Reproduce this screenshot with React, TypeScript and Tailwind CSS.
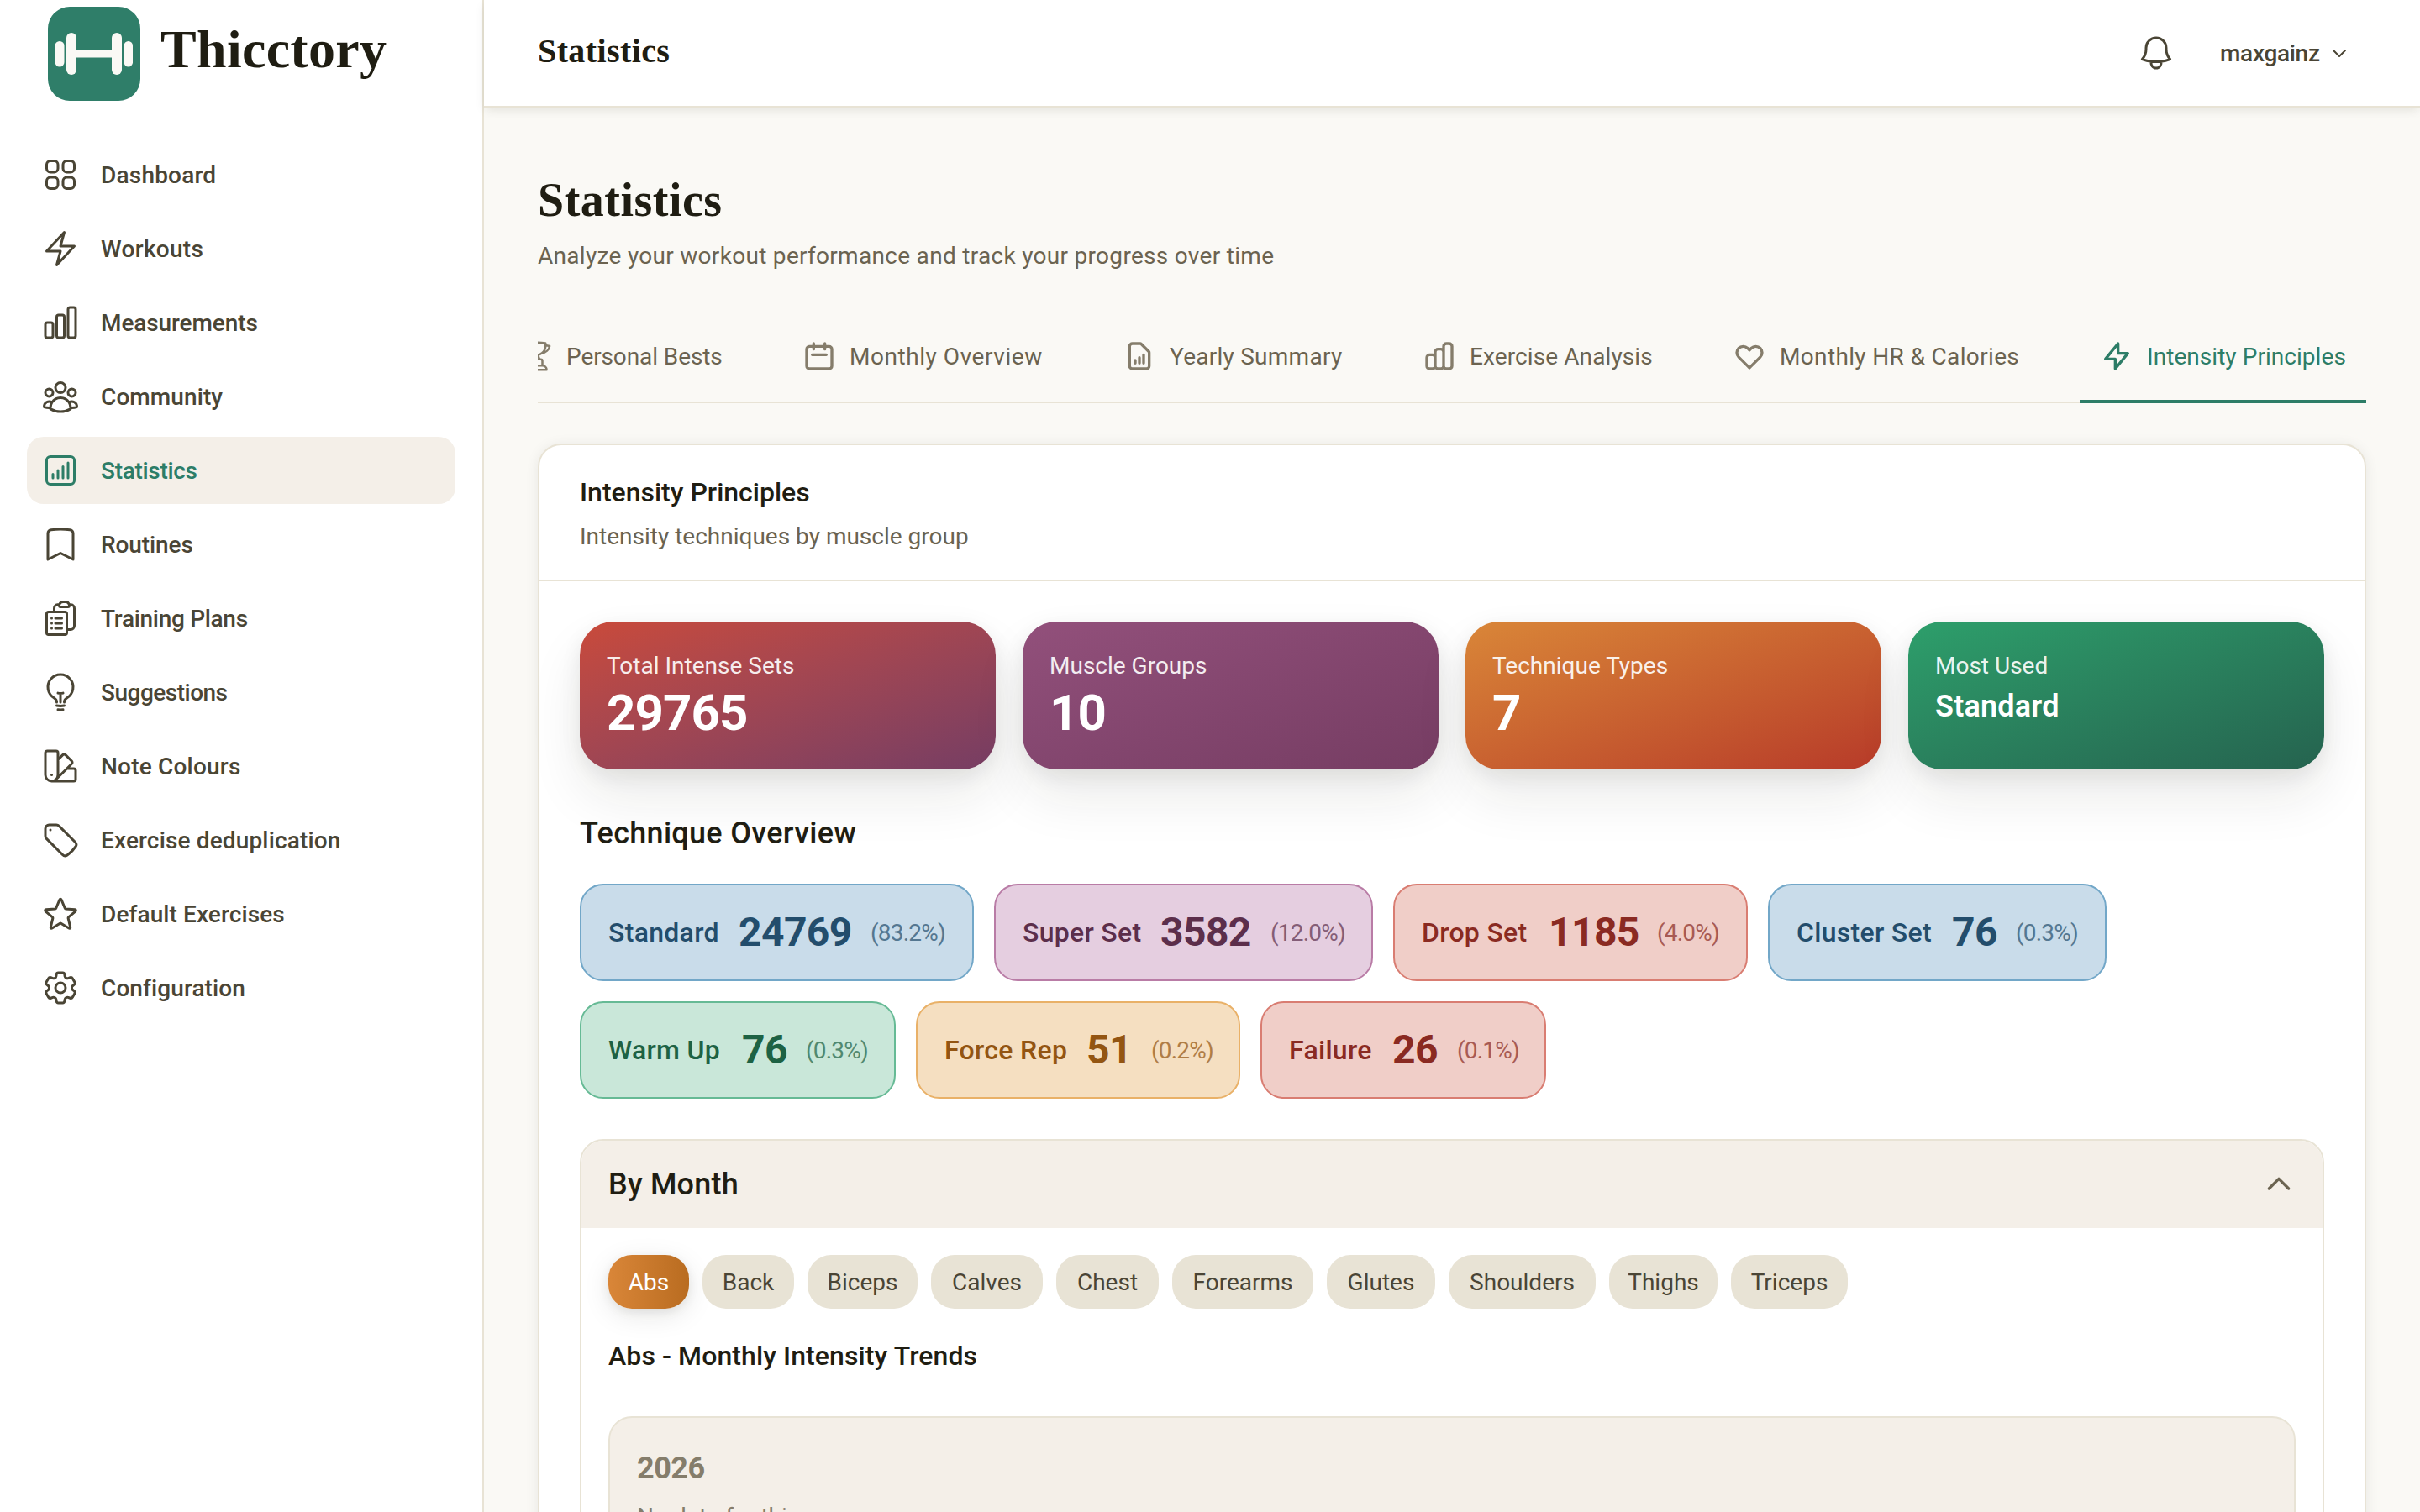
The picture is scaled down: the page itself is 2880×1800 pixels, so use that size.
import React, { useState } from 'react';
import {
  HiOutlineBell,
  HiOutlineBolt,
  HiOutlineBookmark,
  HiOutlineChartBar,
  HiOutlineChartBarSquare,
  HiOutlineClipboardDocumentList,
  HiOutlineCog6Tooth,
  HiOutlineLightBulb,
  HiOutlineSquares2X2,
  HiOutlineStar,
  HiOutlineSwatch,
  HiOutlineTag,
  HiOutlineTrophy,
  HiOutlineUserGroup
} from 'react-icons/hi2';

const navItems = [
  { name: 'Dashboard', icon: HiOutlineSquares2X2, tracking: 'tracking-[0.2px]' },
  { name: 'Workouts', icon: HiOutlineBolt, tracking: 'tracking-[0.3px]' },
  { name: 'Measurements', icon: HiOutlineChartBar, tracking: 'tracking-[-0.1px]' },
  { name: 'Community', icon: HiOutlineUserGroup, tracking: 'tracking-[0.1px]' },
  { name: 'Statistics', icon: HiOutlineChartBarSquare, tracking: 'tracking-[-0.3px]' },
  { name: 'Routines', icon: HiOutlineBookmark, tracking: 'tracking-[-0.1px]' },
  { name: 'Training Plans', icon: HiOutlineClipboardDocumentList, tracking: 'tracking-[-0.3px]' },
  { name: 'Suggestions', icon: HiOutlineLightBulb, tracking: 'tracking-[-0.5px]' },
  { name: 'Note Colours', icon: HiOutlineSwatch, tracking: 'tracking-[0.2px]' },
  { name: 'Exercise deduplication', icon: HiOutlineTag, tracking: 'tracking-[0.15px]' },
  { name: 'Default Exercises', icon: HiOutlineStar, tracking: 'tracking-[0.1px]' },
  { name: 'Configuration', icon: HiOutlineCog6Tooth, tracking: 'tracking-[0.1px]' }
];

const tabs = [
  { name: 'Personal Bests', label: 'w-[185px] tracking-[-0.1px]', path: null },
  {
    name: 'Monthly Overview',
    label: 'w-[229px] tracking-[0.55px]',
    path: 'M8 7V3m8 4V3m-9 8h10M5 21h14a2 2 0 002-2V7a2 2 0 00-2-2H5a2 2 0 00-2 2v12a2 2 0 002 2z'
  },
  {
    name: 'Yearly Summary',
    label: 'w-[205px] tracking-[0.25px]',
    path: 'M9 17v-2m3 2v-4m3 4v-6m2 10H7a2 2 0 01-2-2V5a2 2 0 012-2h5.586a1 1 0 01.707.293l5.414 5.414a1 1 0 01.293.707V19a2 2 0 01-2 2z'
  },
  {
    name: 'Exercise Analysis',
    label: 'w-[217px] tracking-[0.1px]',
    path: 'M9 19v-6a2 2 0 00-2-2H5a2 2 0 00-2 2v6a2 2 0 002 2h2a2 2 0 002-2zm0 0V9a2 2 0 012-2h2a2 2 0 012 2v10m-6 0a2 2 0 002 2h2a2 2 0 002-2m0 0V5a2 2 0 012-2h2a2 2 0 012 2v14a2 2 0 01-2 2h-2a2 2 0 01-2-2z'
  },
  {
    name: 'Monthly HR & Calories',
    label: 'w-[285px] tracking-[0.35px]',
    path: 'M4.318 6.318a4.5 4.5 0 000 6.364L12 20.364l7.682-7.682a4.5 4.5 0 00-6.364-6.364L12 7.636l-1.318-1.318a4.5 4.5 0 00-6.364 0z'
  },
  { name: 'Intensity Principles', label: 'w-[237px] tracking-[0.05px]', path: 'M13 10V3L4 14h7v7l9-11h-7z' }
];

const summaryCards = [
  { label: 'Total Intense Sets', value: '29765', gradient: 'from-[#c94a3a] to-[#763d63]' },
  { label: 'Muscle Groups', value: '10', gradient: 'from-[#92507b] to-[#763d63]' },
  { label: 'Technique Types', value: '7', gradient: 'from-[#d98638] to-[#b73a29]' },
  { label: 'Most Used', value: 'Standard', gradient: 'from-[#2d9f6b] to-[#25634f]', small: true }
];

const blue = 'bg-[#c9dcea] border-[#72a7c8] text-[#234d6c]';
const red = 'bg-[#f0cec8] border-[#d97d72] text-[#8a2a22]';

const techniques = [
  { name: 'Standard', count: 24769, pct: '83.2', color: blue, box: 'w-[469px]', label: 'w-[131px]', num: 'w-[133px]' },
  { name: 'Super Set', count: 3582, pct: '12.0', color: 'bg-[#e5cee0] border-[#b97ca6] text-[#5c2e4b]', box: 'w-[451px]', label: 'w-[140px]', num: 'w-[107px]' },
  { name: 'Drop Set', count: 1185, pct: '4.0', color: red, box: 'w-[422px]', label: 'w-[127px]', num: 'w-[105px]' },
  { name: 'Cluster Set', count: 76, pct: '0.3', color: blue, box: 'w-[403px]', label: 'w-[161px]', num: 'w-[52px]' },
  { name: 'Warm Up', count: 76, pct: '0.3', color: 'bg-[#c9e7d9] border-[#66ba95] text-[#1d6244]', box: 'w-[376px]', label: 'w-[135px]', num: 'w-[52px]' },
  { name: 'Force Rep', count: 51, pct: '0.2', color: 'bg-[#f5dfc1] border-[#e9b168] text-[#935512]', box: 'w-[386px]', label: 'w-[145px]', num: 'w-[53px]' },
  { name: 'Failure', count: 26, pct: '0.1', color: red, box: 'w-[340px]', label: 'w-[99px]', num: 'w-[53px]' }
];

const muscles = [
  { name: 'Abs', width: 'w-[96px]' },
  { name: 'Back', width: 'w-[109px]' },
  { name: 'Biceps', width: 'w-[131px]' },
  { name: 'Calves', width: 'w-[133px]' },
  { name: 'Chest', width: 'w-[122px]' },
  { name: 'Forearms', width: 'w-[168px]' },
  { name: 'Glutes', width: 'w-[129px]' },
  { name: 'Shoulders', width: 'w-[175px]' },
  { name: 'Thighs', width: 'w-[129px]' },
  { name: 'Triceps', width: 'w-[139px]' }
];

interface StrokeIconProps {
  d: string;
  className: string;
}

const StrokeIcon: React.FC<StrokeIconProps> = ({ d, className }) => (
  <svg
    viewBox="0 0 24 24"
    fill="none"
    stroke="currentColor"
    strokeWidth={2}
    strokeLinecap="round"
    strokeLinejoin="round"
    className={className}
  >
    <path d={d} />
  </svg>
);

const Logo = () => (
  <svg viewBox="0 0 112 112" className="size-28 shrink-0">
    <rect x="1" width="110" height="112" rx="26" fill="#2f7e69" />
    <g fill="#faf9f5">
      <rect x="9.5" y="41" width="11" height="30.5" rx="5.5" />
      <rect x="23" y="31" width="12" height="50" rx="6" />
      <rect x="34" y="52" width="44" height="8.5" />
      <rect x="77" y="31" width="12" height="50" rx="6" />
      <rect x="91.5" y="41" width="10.5" height="30.5" rx="5.25" />
    </g>
  </svg>
);

const Sidebar = () => (
  <aside className="w-[576px] shrink-0 border-r-2 border-[#e8e3d5] bg-white">
    <div className="flex h-32 items-center gap-[23px] pl-14">
      <Logo />
      <span className="pb-2.5 font-['Liberation_Serif',serif] text-[64px] leading-none font-bold tracking-[0.3px] text-[#1f1d12]">
        Thicctory
      </span>
    </div>
    <nav className="mt-10 flex flex-col gap-2 px-8">
      {navItems.map(({ name, icon: Icon, tracking }) => (
        <a
          key={name}
          className={`flex h-20 items-center gap-6 rounded-[20px] px-4 text-[28px] font-medium ${tracking} ${
            name === 'Statistics' ? 'bg-[#f4efe8] text-[#2d7d67]' : 'text-[#4a4535]'
          }`}
        >
          <Icon className="size-12" />
          <span className="pt-0.5">{name}</span>
        </a>
      ))}
    </nav>
  </aside>
);

const Header = () => (
  <header className="relative flex h-32 shrink-0 items-center justify-between border-b-2 border-[#e8e3d5] bg-white pr-[84px] pl-16 shadow-[0_4px_12px_-2px_rgba(31,29,18,0.12)]">
    <span className="pb-1 font-['Liberation_Serif',serif] text-[40px] leading-none font-bold tracking-[0.4px] text-[#1f1d12]">
      Statistics
    </span>
    <div className="flex items-center text-[#4a4535]">
      <HiOutlineBell className="mr-[52px] size-12" />
      <span className="mr-3 w-[118px] pt-0.5 text-[28px] font-medium tracking-[-0.3px]">maxgainz</span>
      <StrokeIcon d="M19 9l-7 7-7-7" className="size-6" />
    </div>
  </header>
);

export default function App() {
  const [activeTab, setActiveTab] = useState('Intensity Principles');
  const [muscle, setMuscle] = useState('Abs');

  return (
    <div className="flex h-[1800px] overflow-hidden bg-[#faf9f5] font-[Roboto,sans-serif]">
      <Sidebar />
      <div className="flex min-w-0 flex-1 flex-col">
        <Header />
        <main className="flex min-h-0 flex-1 flex-col overflow-hidden px-16 pt-[65px]">
          <h1 className="shrink-0 font-['Liberation_Serif',serif] text-[56px] leading-[90px] font-bold tracking-[0.5px] text-[#1f1d12]">
            Statistics
          </h1>
          <p className="mt-0.5 shrink-0 text-[28px] leading-10 tracking-[0.3px] text-[#6b6350]">
            Analyze your workout performance and track your progress over time
          </p>

          {/* Tabs, scrolled to the end */}
          <div className="mt-[47px] flex h-[108px] shrink-0 justify-end gap-12 overflow-hidden shadow-[inset_0_-2px_0_#e8e3d5]">
            {tabs.map((tab) => (
              <button
                key={tab.name}
                onClick={() => setActiveTab(tab.name)}
                className={`flex shrink-0 items-center gap-4 border-b-4 px-6 text-[28px] font-[450] whitespace-nowrap ${
                  activeTab === tab.name ? 'border-[#2d7d67] text-[#2d7d67]' : 'border-transparent text-[#6b6350]'
                }`}
              >
                <span className={activeTab === tab.name ? '' : 'text-[#857d6b]'}>
                  {tab.path ? <StrokeIcon d={tab.path} className="size-10" /> : <HiOutlineTrophy className="size-10" />}
                </span>
                <span className={`pt-0.5 text-left ${tab.label}`}>{tab.name}</span>
              </button>
            ))}
          </div>

          <section className="mt-12 shrink-0 rounded-t-[28px] border-2 border-[#e8e3d5] bg-white shadow-[0_2px_16px_rgba(31,29,18,0.08)]">
            <div className="border-b-2 border-[#e8e3d5] px-12 pt-8 pb-[31px]">
              <h2 className="text-[32px] leading-[48px] font-medium text-[#1f1d12]">Intensity Principles</h2>
              <p className="mt-[9px] text-[28px] leading-10 text-[#6b6350]">Intensity techniques by muscle group</p>
            </div>

            <div className="p-12">
              {/* Summary cards */}
              <div className="grid grid-cols-4 gap-8">
                {summaryCards.map((card) => (
                  <div
                    key={card.label}
                    className={`h-44 rounded-[40px] bg-gradient-to-br px-8 pt-[33px] text-white shadow-[0_32px_64px_rgba(31,29,18,0.09),0_8px_24px_rgba(31,29,18,0.08)] ${card.gradient}`}
                  >
                    <div className="text-[28px] leading-10 opacity-90">{card.label}</div>
                    {card.small ? (
                      <div className="text-[36px] leading-[56px] font-semibold tracking-[0.2px]">{card.value}</div>
                    ) : (
                      <div className="text-[60px] leading-[72px] font-bold tracking-[-0.9px]">{card.value}</div>
                    )}
                  </div>
                ))}
              </div>

              {/* Technique overview */}
              <h3 className="mt-12 text-[36px] leading-[56px] font-medium tracking-[0.3px] text-[#1f1d12]">
                Technique Overview
              </h3>
              <div className="mt-8 flex flex-wrap gap-6">
                {techniques.map((t) => (
                  <div
                    key={t.name}
                    className={`flex h-[116px] items-center gap-6 rounded-[28px] border-2 px-8 whitespace-nowrap ${t.color} ${t.box}`}
                  >
                    <span className={`shrink-0 text-[32px] font-medium tracking-[0.3px] ${t.label}`}>{t.name}</span>
                    <span className={`shrink-0 text-[48px] font-bold tracking-[-0.6px] ${t.num}`}>{t.count}</span>
                    <span className="pt-0.5 text-[28px] tracking-[-0.8px] opacity-70">({t.pct}%)</span>
                  </div>
                ))}
              </div>

              {/* By month */}
              <div className="mt-12 rounded-t-[28px] border-2 border-[#e8e3d5]">
                <div className="flex h-[104px] items-center justify-between rounded-t-[26px] bg-[#f4efe8] px-8">
                  <h3 className="text-[36px] font-medium tracking-[0.2px] text-[#1f1d12]">By Month</h3>
                  <StrokeIcon d="M5 15l7-7 7 7" className="size-10 text-[#6b6350]" />
                </div>
                <div className="p-8">
                  <div className="flex gap-4">
                    {muscles.map((m) => (
                      <button
                        key={m.name}
                        onClick={() => setMuscle(m.name)}
                        className={`h-16 rounded-[28px] pt-0.5 text-[28px] font-[450] ${m.width} ${
                          muscle === m.name
                            ? 'bg-gradient-to-r from-[#d98638] to-[#b96c20] text-white shadow-[0_8px_32px_rgba(31,29,18,0.1),0_4px_12px_rgba(31,29,18,0.08)]'
                            : 'bg-[#e8e3d5] text-[#4a4535]'
                        }`}
                      >
                        {m.name}
                      </button>
                    ))}
                  </div>
                  <h4 className="mt-8 text-[32px] leading-[48px] font-medium tracking-[0.1px] text-[#1f1d12]">
                    {muscle} - Monthly Intensity Trends
                  </h4>
                  <div className="mt-12 h-60 rounded-[28px] border-2 border-[#e8e3d5] bg-[#f4efe8] p-8 text-[#857d6b]">
                    <div className="text-[36px] leading-[56px] font-bold tracking-[-0.5px]">2026</div>
                    <div className="mt-2.5 text-[28px] leading-10">No data for this year</div>
                  </div>
                </div>
              </div>
            </div>
          </section>
        </main>
      </div>
    </div>
  );
}
